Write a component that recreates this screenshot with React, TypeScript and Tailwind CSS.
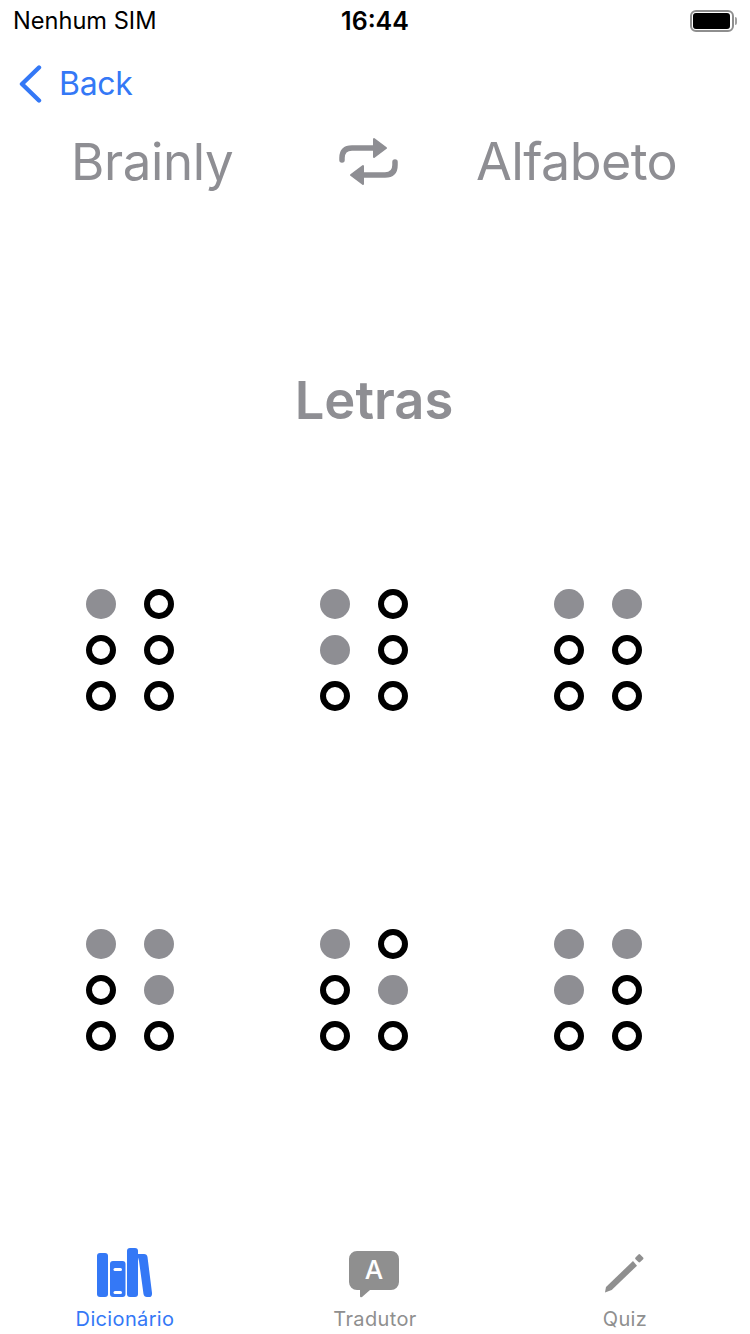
const font = { fontFamily: 'Inter, "Liberation Sans", sans-serif' };

const letters: number[][] = [
  [1, 0, 0, 0, 0, 0],
  [1, 0, 1, 0, 0, 0],
  [1, 1, 0, 0, 0, 0],
  [1, 1, 0, 1, 0, 0],
  [1, 0, 0, 1, 0, 0],
  [1, 1, 1, 0, 0, 0],
];

function Cell({ dots }: { dots: number[] }) {
  return (
    <div className="grid w-[88px] grid-cols-[30px_30px] gap-x-[28px] gap-y-[16px]">
      {dots.map((d, i) =>
        d ? (
          <div key={i} className="h-[30px] w-[30px] rounded-full bg-[#8e8e93]" />
        ) : (
          <div key={i} className="h-[30px] w-[30px] rounded-full border-[6px] border-black bg-white" />
        ),
      )}
    </div>
  );
}

function Battery() {
  return (
    <div className="flex items-center">
      <div className="flex h-[22px] w-[44px] items-center justify-center rounded-[6px] border-2 border-[#8e8e8e]">
        <div className="h-[16px] w-[37px] rounded-[3px] bg-black" />
      </div>
      <div className="ml-[1px] h-[8px] w-[2px] rounded-r-sm bg-[#a0a0a0]" />
    </div>
  );
}

function Tab({ label, active, children }: { label: string; active?: boolean; children: React.ReactNode }) {
  return (
    <div className="flex flex-col items-center">
      <div className="h-[54px] w-[64px]">{children}</div>
      <div className={`mt-[9px] text-[20px] leading-[24px] font-normal tracking-[0.35px] ${active ? 'text-[#3478f6]' : 'text-[#8f8f8f]'}`}>
        {label}
      </div>
    </div>
  );
}

export default function App() {
  return (
    <div className="flex h-[1334px] w-[750px] flex-col overflow-hidden bg-white" style={font}>
      <div className="grid h-[40px] grid-cols-3 items-center pt-[2px] pr-[13px] pl-[13px]">
        <span className="text-[23.6px] leading-[28px] text-black">Nenhum SIM</span>
        <span className="text-center text-[25px] leading-[28px] font-semibold text-black">16:44</span>
        <div className="flex justify-end">
          <Battery />
        </div>
      </div>

      <div className="flex h-[64px] items-center pt-[24px] pl-[19px]">
        <svg width="24" height="38" viewBox="0 0 24 38" fill="none" stroke="#3478f6" strokeWidth="4.4" strokeLinecap="round" strokeLinejoin="round">
          <path d="M20 2.5 3 19l17 16.5" />
        </svg>
        <span className="ml-[16px] text-[32px] leading-[40px] tracking-[-0.3px] text-[#3478f6]">Back</span>
      </div>

      <div className="grid h-[91px] grid-cols-[267px_138px_1fr] items-center pt-[25px] pl-[71px] text-[#8e8e93]">
        <span className="text-[51px] leading-[64px] font-normal tracking-[-0.4px]">Brainly</span>
        <svg width="60" height="52" viewBox="0 0 60 52" fill="none">
          <path d="M4 24v-2q0-10 10-10h23" stroke="#8e8e93" strokeWidth="5.5" strokeLinecap="round" />
          <path d="M36 3v18l12-9z" fill="#8e8e93" stroke="#8e8e93" strokeWidth="2" strokeLinejoin="round" />
          <path d="M57 26v3q0 10-10 10H24" stroke="#8e8e93" strokeWidth="5.5" strokeLinecap="round" />
          <path d="M25 30v18l-12-9z" fill="#8e8e93" stroke="#8e8e93" strokeWidth="2" strokeLinejoin="round" />
        </svg>
        <span className="text-[52px] leading-[64px] font-normal tracking-[-0.6px]">Alfabeto</span>
      </div>

      <div className="mt-[173px] pr-[2px] text-center text-[52.5px] leading-[64px] font-semibold text-[#8e8e93]">Letras</div>

      <div className="mt-[157px] grid grid-cols-[234px_234px_88px] gap-y-[218px] pl-[86px]">
        {letters.map((dots, i) => (
          <Cell key={i} dots={dots} />
        ))}
      </div>

      <div className="mt-auto grid h-[90px] grid-cols-3 justify-items-center">
        <Tab label="Dicionário" active>
          <svg width="64" height="54" viewBox="0 0 64 54" fill="#3478f6">
            <rect x="4" y="9" width="11" height="44" rx="3" />
            <rect x="17" y="17" width="15.5" height="36" rx="3" />
            <rect x="34" y="4" width="11" height="49" rx="3" />
            <path d="M44 10h7q3 0 3.5 3L59 49q.3 4-3 4h-2q-3 0-3.5-3L46 17z" />
            <rect x="20.5" y="24" width="8.5" height="3" rx="1.5" fill="#fff" />
            <rect x="20.5" y="47" width="8.5" height="3" rx="1.5" fill="#fff" />
          </svg>
        </Tab>
        <Tab label="Tradutor">
          <svg width="64" height="54" viewBox="0 0 64 54">
            <path d="M14 7h34a8 8 0 0 1 8 8v23a8 8 0 0 1-8 8H27l-8 7q-2 1-2-1v-6h-3a8 8 0 0 1-8-8V15a8 8 0 0 1 8-8z" fill="#8f8f8f" />
            <text x="31" y="35" textAnchor="middle" fontSize="26" fontWeight="500" fill="#fff">A</text>
          </svg>
        </Tab>
        <Tab label="Quiz">
          <svg width="64" height="54" viewBox="0 0 64 54" fill="#8f8f8f">
            <path d="M12 48.5l1-5.5 27-26 4 4.7L18.7 46z" />
            <rect x="43" y="11" width="6.6" height="6.6" rx="1.2" transform="rotate(45 46.3 14.3)" />
          </svg>
        </Tab>
      </div>
    </div>
  );
}
